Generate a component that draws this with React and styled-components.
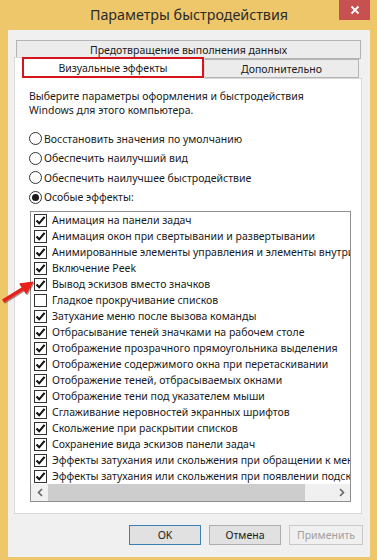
import React from 'react';
import styled, { createGlobalStyle } from 'styled-components';

const GlobalStyle = createGlobalStyle`
  html, body {
    margin: 0;
    padding: 0;
    background: #efc76b;
  }
  body {
    font-family: "Noto Sans", "Open Sans", sans-serif;
  }
`;

const Window = styled.div`
  position: relative;
  width: 377px;
  height: 560px;
  box-sizing: border-box;
  display: flex;
  flex-direction: column;
  padding: 0 7px 5px 8px;
  background: #efc76b;
`;

const TitleBar = styled.div`
  height: 30px;
  display: grid;
  grid-template-columns: 31px 1fr 31px;
  align-items: start;
`;

const Title = styled.div`
  grid-column: 2;
  text-align: center;
  font-size: 14.3px;
  line-height: 30px;
  color: #2a2a2a;
`;

const CloseButton = styled.div`
  grid-column: 3;
  height: 20px;
  background: #c75050;
  display: flex;
  align-items: center;
  justify-content: center;
`;

const Client = styled.div`
  flex: 1;
  display: flex;
  flex-direction: column;
  background: #f0f0f0;
  padding: 10px 8px 12px 6px;
`;

const TabStrip = styled.div`
  display: flex;
  flex-direction: column;
`;

const TabRow = styled.div`
  display: flex;
  align-items: flex-end;
  padding-left: ${p => p.indent || 0}px;
  margin-top: ${p => p.overlap ? -2 : 0}px;
`;

const Tab = styled.div`
  box-sizing: border-box;
  width: ${p => p.width}px;
  height: ${p => p.active ? 22 : 19}px;
  margin-left: ${p => p.join ? -1 : 0}px;
  margin-bottom: ${p => p.active ? -1 : 0}px;
  position: relative;
  z-index: ${p => p.active ? 2 : 1};
  background: ${p => p.active ? '#ffffff' : '#ececec'};
  border: 1px solid ${p => p.active ? '#d9d9d9' : '#b4b4b4'};
  border-bottom: ${p => p.active ? 'none' : '1px solid #b4b4b4'};
  font-size: 10.5px;
  color: #1a1a1a;
  display: flex;
  align-items: center;
  justify-content: center;
  padding: ${p => p.active ? '0 0 1px 7px' : '0'};
`;

const Highlight = styled.span`
  box-sizing: border-box;
  flex: 1;
  align-self: stretch;
  display: flex;
  align-items: center;
  justify-content: center;
  border: 2px solid #d7141c;
  margin-top: -1px;
`;

const Panel = styled.div`
  box-sizing: border-box;
  height: 436px;
  display: flex;
  flex-direction: column;
  background: #ffffff;
  border: 1px solid #d9d9d9;
  padding: 10px 10px 11px 14px;
  font-size: 10.5px;
  color: #1a1a1a;
`;

const Intro = styled.p`
  margin: 0 0 12px;
  line-height: 14px;
`;

const RadioRow = styled.div`
  height: 19.5px;
  display: flex;
  align-items: center;
  gap: 2px;
`;

const RadioCircle = styled.span`
  box-sizing: border-box;
  width: 13px;
  height: 13px;
  border-radius: 50%;
  border: 1px solid #333333;
  background: #ffffff;
  display: flex;
  align-items: center;
  justify-content: center;
  &::after {
    content: '';
    display: ${p => p.checked ? 'block' : 'none'};
    width: 7px;
    height: 7px;
    border-radius: 50%;
    background: #1a1a1a;
  }
`;

const ListBox = styled.div`
  box-sizing: border-box;
  width: 321px;
  height: 291px;
  margin: 4px 0 0 1px;
  border: 1px solid #8e8f8f;
  display: flex;
  flex-direction: column;
  overflow: hidden;
`;

const Items = styled.div`
  flex: 1;
  overflow: hidden;
`;

const Item = styled.div`
  height: 16px;
  display: flex;
  align-items: center;
  gap: 5px;
  padding-left: 3px;
  white-space: nowrap;
`;

const CheckBox = styled.span`
  box-sizing: border-box;
  flex: none;
  width: 13px;
  height: 13px;
  border: 1px solid #333333;
  background: #ffffff;
  display: flex;
  align-items: center;
  justify-content: center;
`;

const ScrollBar = styled.div`
  height: 17px;
  display: flex;
  background: #f0f0f0;
`;

const ScrollArrow = styled.div`
  width: 17px;
  display: flex;
  align-items: center;
  justify-content: center;
`;

const ScrollTrack = styled.div`
  flex: 1;
  display: flex;
  align-items: center;
`;

const ScrollThumb = styled.div`
  width: 257px;
  height: 17px;
  background: #cdcdcd;
`;

const ButtonRow = styled.div`
  display: flex;
  justify-content: flex-end;
  gap: 8px;
  margin-top: 11px;
  margin-right: -1px;
`;

const Button = styled.div`
  box-sizing: border-box;
  width: ${p => p.width || 72}px;
  height: 20px;
  display: flex;
  align-items: center;
  justify-content: center;
  font-size: 10.5px;
  background: ${p => p.disabled ? '#f0f0f0' : '#e1e1e1'};
  color: ${p => p.disabled ? '#a0a0a0' : '#1a1a1a'};
  border: 1px solid ${p => p.primary ? '#3c7fb1' : p.disabled ? '#c8c8c8' : '#adadad'};
`;

const Arrow = styled.svg`
  position: absolute;
  left: 0;
  top: 270px;
  width: 40px;
  height: 36px;
  pointer-events: none;
`;

const effects = [
  ['Анимация на панели задач', true],
  ['Анимация окон при свертывании и развертывании', true],
  ['Анимированные элементы управления и элементы внутри окна', true],
  ['Включение Peek', true],
  ['Вывод эскизов вместо значков', true],
  ['Гладкое прокручивание списков', false],
  ['Затухание меню после вызова команды', true],
  ['Отбрасывание теней значками на рабочем столе', true],
  ['Отображение прозрачного прямоугольника выделения', true],
  ['Отображение содержимого окна при перетаскивании', true],
  ['Отображение теней, отбрасываемых окнами', true],
  ['Отображение тени под указателем мыши', true],
  ['Сглаживание неровностей экранных шрифтов', true],
  ['Скольжение при раскрытии списков', true],
  ['Сохранение вида эскизов панели задач', true],
  ['Эффекты затухания или скольжения при обращении к меню', true],
  ['Эффекты затухания или скольжения при появлении подсказок', true],
];

const radios = [
  ['Восстановить значения по умолчанию', false],
  ['Обеспечить наилучший вид', false],
  ['Обеспечить наилучшее быстродействие', false],
  ['Особые эффекты:', true],
];

const Check = () => (
  <svg width="11" height="11" viewBox="0 0 11 11">
    <path d="M1.5 5.5 L4.2 8.3 L9.6 1.8" fill="none" stroke="#111" strokeWidth="2.1" />
  </svg>
);

const App = () => (
  <>
    <GlobalStyle />
    <Window>
      <TitleBar>
        <Title>Параметры быстродействия</Title>
        <CloseButton>
          <svg width="10" height="10" viewBox="0 0 10 10">
            <path d="M1.5 1.5 L8.5 8.5 M8.5 1.5 L1.5 8.5" stroke="#fff" strokeWidth="1.8" />
          </svg>
        </CloseButton>
      </TitleBar>
      <Client>
        <TabStrip>
          <TabRow indent={2}>
            <Tab width={345}>Предотвращение выполнения данных</Tab>
          </TabRow>
          <TabRow overlap>
            <Tab width={191} active>
              <Highlight>Визуальные эффекты</Highlight>
            </Tab>
            <Tab width={155} join>Дополнительно</Tab>
          </TabRow>
        </TabStrip>
        <Panel>
          <Intro>
            Выберите параметры оформления и быстродействия<br />
            Windows для этого компьютера.
          </Intro>
          {radios.map(([label, on]) => (
            <RadioRow key={label}>
              <RadioCircle checked={on} />
              <span>{label}</span>
            </RadioRow>
          ))}
          <ListBox>
            <Items>
              {effects.map(([label, on]) => (
                <Item key={label}>
                  <CheckBox>{on && <Check />}</CheckBox>
                  <span>{label}</span>
                </Item>
              ))}
            </Items>
            <ScrollBar>
              <ScrollArrow>
                <svg width="6" height="9" viewBox="0 0 6 9">
                  <path d="M5 1 L1.5 4.5 L5 8" fill="none" stroke="#606060" strokeWidth="1.5" />
                </svg>
              </ScrollArrow>
              <ScrollTrack>
                <ScrollThumb />
              </ScrollTrack>
              <ScrollArrow>
                <svg width="6" height="9" viewBox="0 0 6 9">
                  <path d="M1 1 L4.5 4.5 L1 8" fill="none" stroke="#606060" strokeWidth="1.5" />
                </svg>
              </ScrollArrow>
            </ScrollBar>
          </ListBox>
        </Panel>
        <ButtonRow>
          <Button primary>OK</Button>
          <Button>Отмена</Button>
          <Button width={74} disabled>Применить</Button>
        </ButtonRow>
      </Client>
      <Arrow viewBox="0 0 40 36">
        <g transform="translate(1 1.2)" fill="#5a1010" stroke="#5a1010" opacity="0.45">
          <line x1="3" y1="31" x2="24" y2="18" strokeWidth="3.6" />
          <polygon points="33,12 19.8,13.8 26.2,23.6" />
        </g>
        <g fill="#e8201c" stroke="#e8201c">
          <line x1="3" y1="31" x2="24" y2="18" strokeWidth="3.6" />
          <polygon points="33,12 19.8,13.8 26.2,23.6" />
        </g>
      </Arrow>
    </Window>
  </>
);

export default App;
